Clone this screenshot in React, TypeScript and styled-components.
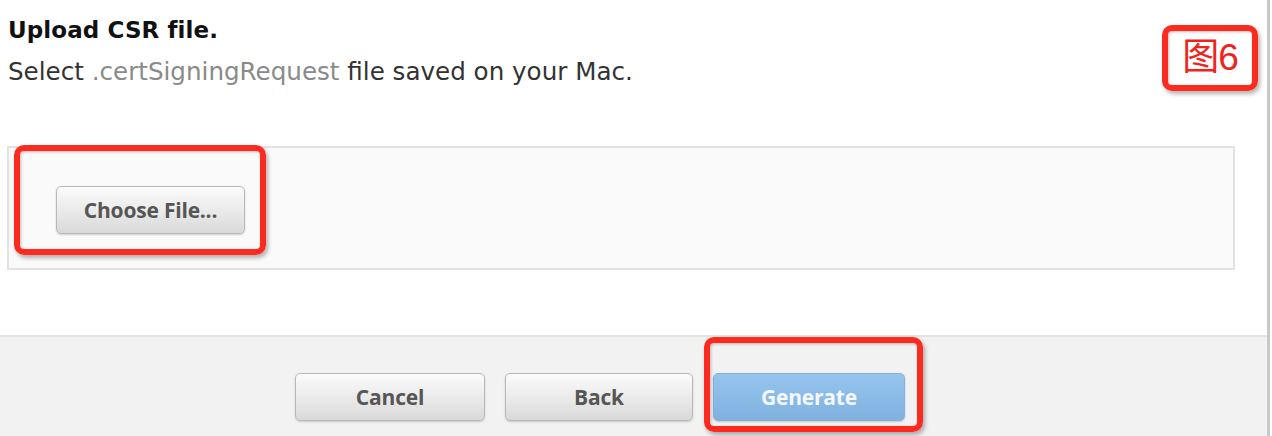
import React from "react";
import styled, { createGlobalStyle } from "styled-components";

const Global = createGlobalStyle`
  html, body { margin: 0; padding: 0; background: #fff; }
  body { font-family: "DejaVu Sans", "Noto Sans", sans-serif; }
`;

const Page = styled.div`
  position: relative;
  width: 1267px;
  height: 436px;
  border-right: 3px solid #c9c9c9;
  display: flex;
  flex-direction: column;
  overflow: hidden;
`;

const Content = styled.div`
  padding: 15px 0 0 8px;
  flex: 1;
  display: flex;
  flex-direction: column;
`;

const Title = styled.h2`
  margin: 0;
  font-family: "DejaVu Sans", sans-serif;
  font-size: 23px;
  font-weight: 700;
  color: #111;
  line-height: 30px;
  letter-spacing: 0.1px;
`;

const Desc = styled.p`
  margin: 12px 0 0;
  font-family: "DejaVu Sans", sans-serif;
  font-size: 24.6px;
  color: #333;
  line-height: 30px;
  letter-spacing: 0;
`;

const Muted = styled.span`
  color: #8a8a8a;
`;

const FileBox = styled.div`
  margin: 59px 0 0 -1px;
  width: 1224px;
  height: 120px;
  border: 2px solid #e2e2e2;
  background: #fafafa;
  box-sizing: content-box;
  display: flex;
  align-items: flex-start;
`;

const Button = styled.button<{ $primary?: boolean; $w?: number }>`
  width: ${(p) => p.$w ?? 190}px;
  height: 48px;
  border-radius: 5px;
  font-family: "Open Sans", "Noto Sans", sans-serif;
  font-weight: 700;
  font-size: 21px;
  letter-spacing: -0.2px;
  cursor: pointer;
  border: 1px solid ${(p) => (p.$primary ? "#86b1da" : "#b9b9b9")};
  color: ${(p) => (p.$primary ? "#f4f8fc" : "#565656")};
  background: ${(p) =>
    p.$primary
      ? "linear-gradient(#95c5ee, #80b1df)"
      : "linear-gradient(#fbfbfb, #e9e9e9 55%, #d9d9d9)"};
  box-shadow: 0 1px 2px rgba(0, 0, 0, 0.18);
  padding: 0;
`;

const ChooseWrap = styled.div`
  margin: 38px 0 0 47px;
`;

const Footer = styled.div`
  height: 101px;
  border-top: 2px solid #e3e3e3;
  background: #f2f2f2;
  display: flex;
  align-items: flex-start;
  gap: 20px;
  padding: 36px 0 0 295px;
  box-sizing: border-box;
`;

const Mark = styled.div<{ $x: number; $y: number; $w: number; $h: number }>`
  position: absolute;
  left: ${(p) => p.$x}px;
  top: ${(p) => p.$y}px;
  width: ${(p) => p.$w}px;
  height: ${(p) => p.$h}px;
  box-sizing: border-box;
  border: 6px solid #fd2a1f;
  border-radius: 10px;
  box-shadow: 2px 3px 4px rgba(0, 0, 0, 0.3), inset 1px 1px 3px rgba(0, 0, 0, 0.25);
  display: flex;
  align-items: center;
  justify-content: center;
  pointer-events: none;
`;

const Label = styled.span`
  font-family: "Liberation Sans", "Noto Sans CJK SC", sans-serif;
  font-size: 37px;
  color: #f0231a;
  line-height: 1;
  margin-top: -1px;
  letter-spacing: -1px;
`;

export default function App() {
  return (
    <>
      <Global />
      <Page>
        <Content>
          <Title>Upload CSR file.</Title>
          <Desc>
            Select <Muted>.certSigningRequest</Muted> file saved on your Mac.
          </Desc>
          <FileBox>
            <ChooseWrap>
              <Button $w={189}>Choose File...</Button>
            </ChooseWrap>
          </FileBox>
        </Content>
        <Footer>
          <Button>Cancel</Button>
          <Button $w={188}>Back</Button>
          <Button $primary $w={192}>Generate</Button>
        </Footer>
        <Mark $x={14} $y={145} $w={252} $h={110} />
        <Mark $x={704} $y={337} $w={219} $h={95} />
        <Mark $x={1162} $y={25} $w={96} $h={66}>
          <Label>图6</Label>
        </Mark>
      </Page>
    </>
  );
}
